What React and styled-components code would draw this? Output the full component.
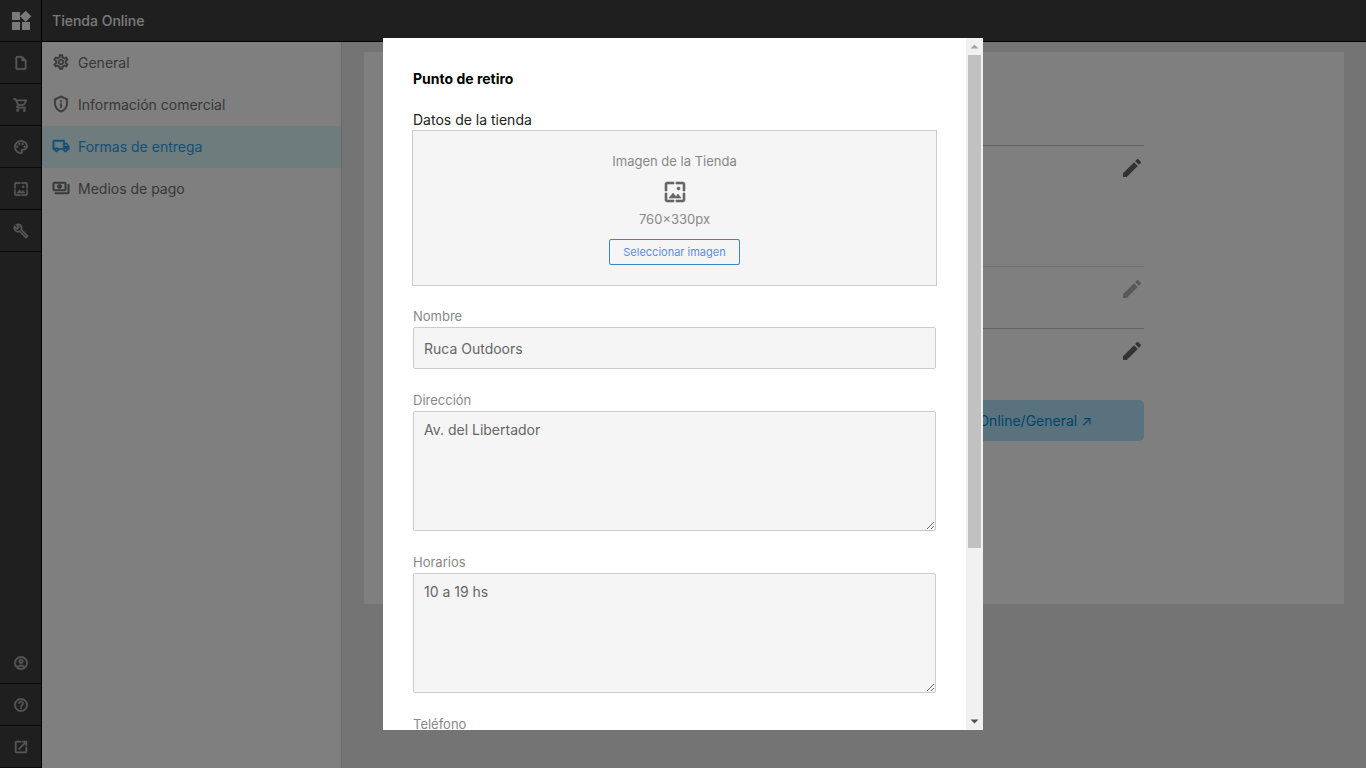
import React from 'react'
import styled, { createGlobalStyle } from 'styled-components'
import {
  MdWidgets,
  MdOutlineInsertDriveFile,
  MdOutlineShoppingCart,
  MdOutlinePalette,
  MdWallpaper,
  MdOutlineBuild,
  MdOutlineAccountCircle,
  MdHelpOutline,
  MdOpenInNew,
  MdOutlineSettings,
  MdOutlinePrivacyTip,
  MdOutlineLocalShipping,
  MdOutlinePayments,
  MdEdit,
} from 'react-icons/md'

const GlobalStyle = createGlobalStyle`
  * {
    box-sizing: border-box;
  }

  body {
    margin: 0;
    font-family: Inter, "Liberation Sans", sans-serif;
    font-size: 14px;
    color: #666;
  }

  button, input, textarea {
    font-family: inherit;
  }

  /* the icons carry an empty 24x24 frame that must not be outlined */
  svg [fill="none"] {
    stroke: none;
  }
`

const Page = styled.div`
  display: flex;
  height: 100vh;
  overflow: hidden;
  background-color: #e9e9e9;
`

const Rail = styled.nav`
  display: flex;
  flex-direction: column;
  justify-content: space-between;
  width: 42px;
  border-right: 1px solid #000;
  background-color: #3e3e3e;
`

const RailLink = styled.a`
  display: flex;
  align-items: center;
  justify-content: center;
  height: 42px;
  border-bottom: 1px solid #141414;
  color: ${props => props.$brand ? "#f4f4f4" : "#b0b0b0"};
  font-size: ${props => props.$brand ? "24px" : "16px"};

  svg {
    stroke-width: ${props => props.$brand ? 0 : 0.7};
  }
`

const Body = styled.div`
  flex: 1;
  display: flex;
  flex-direction: column;
  min-width: 0;
`

const Header = styled.header`
  display: flex;
  align-items: center;
  height: 42px;
  padding: 0 10px;
  border-bottom: 1px solid #000;
  background-color: #3e3e3e;
`

const HeaderTitle = styled.h1`
  margin: 0;
  font-size: 14px;
  font-weight: 500;
  color: #f4f4f4;
`

const Columns = styled.div`
  flex: 1;
  display: flex;
  min-height: 0;
`

const Menu = styled.nav`
  width: 300px;
  border-right: 1px solid #d0d0d0;
  background-color: #fff;
`

const MenuLink = styled.a`
  display: flex;
  align-items: center;
  gap: 8px;
  height: 42px;
  padding: 0 10px 2px;
  text-decoration: none;
  color: ${props => props.$active ? "#24a0f0" : "#707070"};
  background-color: ${props => props.$active ? "#dcf8fc" : "transparent"};

  svg {
    font-size: 18px;
    stroke-width: 0.6;
  }
`

const Main = styled.main`
  flex: 1;
  padding: 10px 22px;
`

const Panel = styled.div`
  min-height: 552px;
  padding: 0 20px;
  background-color: #fff;
`

const Settings = styled.div`
  max-width: 760px;
  padding-top: 93px;
`

const Setting = styled.div`
  display: flex;
  justify-content: flex-end;
  align-items: flex-start;
  height: ${props => props.$tall ? "121px" : "62px"};
  padding-top: 10px;
  border-top: 1px solid #c4c4c4;
  opacity: ${props => props.$off ? 0.5 : 1};
`

const EditButton = styled.button`
  display: flex;
  padding: 0;
  border: 0;
  background: none;
  font-size: 24px;
  color: #666;
`

const Notice = styled.div`
  display: flex;
  align-items: center;
  justify-content: flex-end;
  height: 41px;
  margin-top: 10px;
  padding: 0 52px;
  border-radius: 5px;
  background-color: #b3e5fc;
`

const NoticeLink = styled.a`
  text-decoration: none;
  color: #0288d1;
`

const Overlay = styled.div`
  position: fixed;
  inset: 0;
  display: flex;
  align-items: center;
  justify-content: center;
  background-color: rgba(0, 0, 0, 0.5);
`

const Modal = styled.div`
  display: flex;
  width: 600px;
  max-width: 100%;
  height: 90vh;
  background-color: #fff;
`

const ModalContent = styled.div`
  flex: 1;
  min-width: 0;
  overflow-y: auto;
  scrollbar-width: none;
`

const ScrollBar = styled.div`
  display: flex;
  flex-direction: column;
  width: 17px;
  background-color: #f1f1f1;
`

const ScrollButton = styled.div`
  display: flex;
  align-items: center;
  justify-content: center;
  height: 17px;
  color: ${props => props.$disabled ? "#a3a3a3" : "#505050"};
`

const ScrollTrack = styled.div`
  flex: 1;
  padding: 0 2px;
`

const ScrollThumb = styled.div`
  height: 75%;
  background-color: #c1c1c1;
`

const Form = styled.form`
  padding: 30px;
`

const FormTitle = styled.h2`
  margin: 0 0 20px;
  font-size: 14px;
  font-weight: 700;
  line-height: 22px;
  color: #000;
`

const FormSubtitle = styled.h3`
  margin: 0;
  font-size: 14px;
  font-weight: 400;
  line-height: 20px;
  color: #222;
`

const ImageBox = styled.div`
  display: flex;
  flex-direction: column;
  align-items: center;
  margin: 0 -1px 20px;
  padding: 20px;
  border: 1px solid #ccc;
  background-color: #f5f5f5;
  font-size: 13px;
  line-height: 20px;
  color: #888;

  svg {
    margin: 9px 0 5px;
    font-size: 24px;
    color: #666;
    stroke-width: 0.6;
  }
`

const ImageButton = styled.button`
  height: 26px;
  margin-top: 10px;
  padding: 0 13px;
  border: 1px solid #3a87cd;
  border-radius: 2px;
  background-color: transparent;
  font-size: 11px;
  color: #5b8de0;
`

const Field = styled.div`
  display: flex;
  flex-direction: column;
  margin-bottom: 21px;
`

const Label = styled.label`
  font-size: 13px;
  line-height: 21px;
  color: #888;
`

const Input = styled.input`
  height: 42px;
  padding: 0 10px;
  border: 1px solid #ccc;
  border-radius: 2px;
  outline: none;
  background-color: #f5f5f5;
  font-size: 14px;
  color: #666;
`

const TextArea = styled.textarea`
  height: 120px;
  padding: 9px 10px;
  border: 1px solid #ccc;
  border-radius: 2px;
  outline: none;
  background-color: #f5f5f5;
  font-size: 14px;
  line-height: 17px;
  color: #666;
  resize: vertical;
`

const railTop = [
  { label: "Páginas", icon: MdOutlineInsertDriveFile },
  { label: "Ventas", icon: MdOutlineShoppingCart },
  { label: "Diseño", icon: MdOutlinePalette },
  { label: "Imágenes", icon: MdWallpaper },
  { label: "Herramientas", icon: MdOutlineBuild },
]

const railBottom = [
  { label: "Cuenta", icon: MdOutlineAccountCircle },
  { label: "Ayuda", icon: MdHelpOutline },
  { label: "Abrir tienda", icon: MdOpenInNew },
]

const menu = [
  { text: "General", icon: MdOutlineSettings },
  { text: "Información comercial", icon: MdOutlinePrivacyTip },
  { text: "Formas de entrega", icon: MdOutlineLocalShipping, active: true },
  { text: "Medios de pago", icon: MdOutlinePayments },
]

const PickupModal = () => {
  return (
    <Overlay>
      <Modal role="dialog" aria-labelledby="pickup-title">
        <ModalContent>
          <Form>
            <FormTitle id="pickup-title">Punto de retiro</FormTitle>
            <FormSubtitle>Datos de la tienda</FormSubtitle>
            <ImageBox>
              <span>Imagen de la Tienda</span>
              <MdWallpaper />
              <span>760×330px</span>
              <ImageButton type="button">Seleccionar imagen</ImageButton>
            </ImageBox>
            <Field>
              <Label htmlFor="name">Nombre</Label>
              <Input id="name" defaultValue="Ruca Outdoors" />
            </Field>
            <Field>
              <Label htmlFor="address">Dirección</Label>
              <TextArea id="address" defaultValue="Av. del Libertador" />
            </Field>
            <Field>
              <Label htmlFor="hours">Horarios</Label>
              <TextArea id="hours" defaultValue="10 a 19 hs" />
            </Field>
            <Field>
              <Label htmlFor="phone">Teléfono</Label>
              <TextArea id="phone" />
            </Field>
          </Form>
        </ModalContent>
        <ScrollBar aria-hidden="true">
          <ScrollButton $disabled>
            <svg width="9" height="5" viewBox="0 0 9 5" fill="currentColor">
              <path d="M4.5 0.5 L8.5 4.5 H0.5 Z" />
            </svg>
          </ScrollButton>
          <ScrollTrack>
            <ScrollThumb />
          </ScrollTrack>
          <ScrollButton>
            <svg width="9" height="5" viewBox="0 0 9 5" fill="currentColor">
              <path d="M0.5 0.5 H8.5 L4.5 4.5 Z" />
            </svg>
          </ScrollButton>
        </ScrollBar>
      </Modal>
    </Overlay>
  )
}

const App = () => {
  return (
    <>
      <GlobalStyle />
      <Page>
        <Rail>
          <div>
            <RailLink href="#" aria-label="Inicio" $brand>
              <MdWidgets />
            </RailLink>
            {railTop.map(({ label, icon: Icon }) => (
              <RailLink href="#" aria-label={label} key={label}>
                <Icon />
              </RailLink>
            ))}
          </div>
          <div>
            {railBottom.map(({ label, icon: Icon }) => (
              <RailLink href="#" aria-label={label} key={label}>
                <Icon />
              </RailLink>
            ))}
          </div>
        </Rail>
        <Body>
          <Header>
            <HeaderTitle>Tienda Online</HeaderTitle>
          </Header>
          <Columns>
            <Menu>
              {menu.map(({ text, icon: Icon, active }) => (
                <MenuLink href="#" $active={active} key={text}>
                  <Icon />
                  {text}
                </MenuLink>
              ))}
            </Menu>
            <Main>
              <Panel>
                <Settings>
                  <Setting $tall>
                    <EditButton aria-label="Editar"><MdEdit /></EditButton>
                  </Setting>
                  <Setting $off>
                    <EditButton aria-label="Editar"><MdEdit /></EditButton>
                  </Setting>
                  <Setting>
                    <EditButton aria-label="Editar"><MdEdit /></EditButton>
                  </Setting>
                  <Notice>
                    <NoticeLink href="#">Tienda Online/General ↗</NoticeLink>
                  </Notice>
                </Settings>
              </Panel>
            </Main>
          </Columns>
        </Body>
      </Page>
      <PickupModal />
    </>
  )
}

export default App
